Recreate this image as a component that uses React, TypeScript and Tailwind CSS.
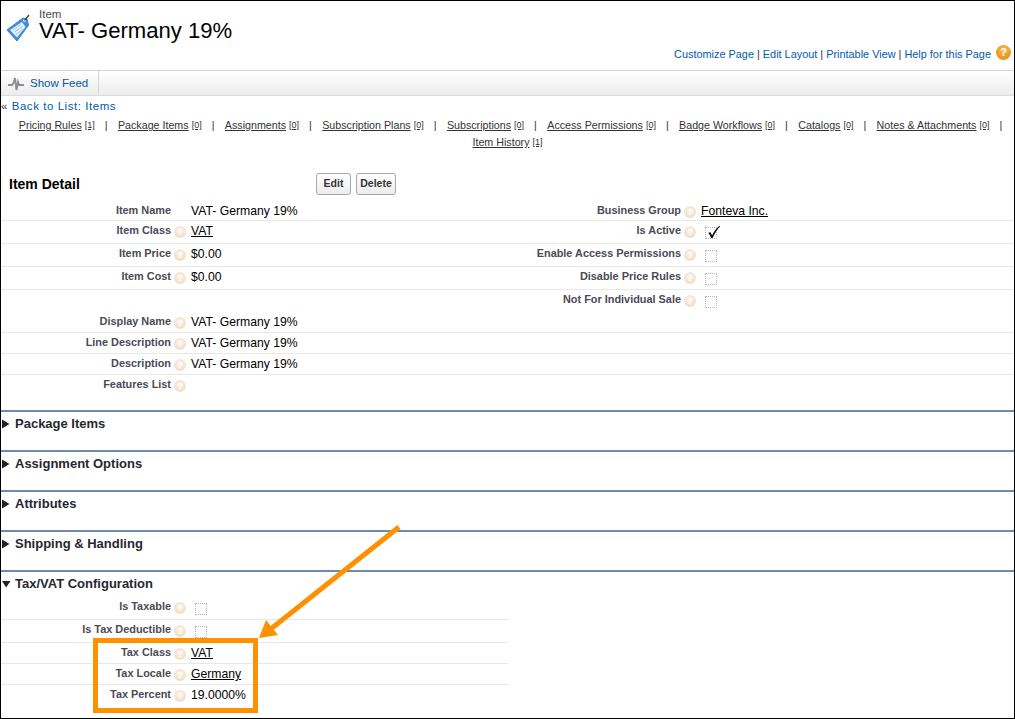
import React from "react";

const font = "font-['Liberation_Sans',Arial,sans-serif]";

function Help() {
  return (
    <span className="flex h-[12px] w-[12px] shrink-0 items-center justify-center rounded-full bg-[radial-gradient(circle_at_50%_40%,#fbf4ea,#eed6ba)] text-[9px] leading-none font-bold text-white">
      ?
    </span>
  );
}

function Check({ on }: { on?: boolean }) {
  return (
    <span className="relative ml-[4px] mt-[3px] block h-[12px] w-[12px] border border-dotted border-[#b5b5b5]">
      {on && (
        <svg className="absolute left-[1px] top-[-3px]" width="14" height="14" viewBox="0 0 15 15">
          <path d="M1.5 8.5 L3.5 7.5 L5.5 11 C7.5 7 10 3.5 13.5 0.8 L14 1.5 C11 4.5 8.5 8.5 6 14 L4.5 14 C3.8 12 2.8 10 1.5 8.5 Z" fill="#111" />
        </svg>
      )}
    </span>
  );
}

function Field({
  label,
  help = true,
  children,
  first,
}: {
  label?: string;
  help?: boolean;
  children?: React.ReactNode;
  first?: boolean;
}) {
  return (
    <div className={`flex min-w-0 flex-1 items-start ${first ? "pt-[2px]" : ""}`}>
      <div className="w-[170px] shrink-0 pt-[2px] text-right text-[10.9px] leading-[14px] font-bold text-[#4a4a56]">{label}</div>
      <div className="flex w-[20px] shrink-0 justify-center pt-[5px] pr-[2px]">{label && help ? <Help /> : null}</div>
      <div className="flex-1 pt-[3px] text-[12.2px] leading-[15px] text-black">{children}</div>
    </div>
  );
}

function Row({
  h,
  left,
  right,
  plain,
}: {
  h: string;
  left?: React.ReactNode;
  right?: React.ReactNode;
  plain?: boolean;
}) {
  return (
    <div className={`flex ${h} ${plain ? "" : "border-b border-[#e8e8e8]"}`}>
      <div className="flex w-[510px] shrink-0">{left}</div>
      <div className="flex flex-1">{right}</div>
    </div>
  );
}

function Section({ title, open }: { title: string; open?: boolean }) {
  return (
    <div className={`${open ? "h-[27px]" : "h-[40px]"} flex items-start border-t-2 border-[#6f8bab] pt-[4px]`}>
      <svg className="mt-[3px]" width="11" height="10" viewBox="0 0 11 10">
        {open ? <path d="M1 2 H9.5 L5.2 8.5 Z" fill="#222" /> : <path d="M1 0.5 V9.5 L8.5 5 Z" fill="#222" />}
      </svg>
      <span className="ml-[3px] text-[13px] leading-[16px] font-bold text-[#27282e]">{title}</span>
    </div>
  );
}

const links: [string, string][] = [
  ["Pricing Rules", "[1]"],
  ["Package Items", "[0]"],
  ["Assignments", "[0]"],
  ["Subscription Plans", "[0]"],
  ["Subscriptions", "[0]"],
  ["Access Permissions", "[0]"],
  ["Badge Workflows", "[0]"],
  ["Catalogs", "[0]"],
  ["Notes & Attachments", "[0]"],
];

export default function App() {
  return (
    <div className={`${font} relative h-[719px] w-[1015px] overflow-hidden border border-black bg-white`}>
      {/* Header */}
      <div className="relative flex h-[70px] border-b border-[#d4d4d4]">
        <svg className="ml-[5px] mt-[13px] shrink-0" width="26" height="28" viewBox="0 0 26 28">
          <path d="M1 16 L17 4 L21 5 L22.5 11 L11 27 Z" fill="#3f8fdd" stroke="#3a7fc8" strokeLinejoin="round" />
          <path d="M4 16 L16 8 L19.5 13 L11 23.5 Z" fill="#eaf2fa" />
          <path d="M7 16 L15 10.5 M8.5 18 L16.5 12.5 M10 20.5 L17 15" stroke="#9dbfe0" strokeWidth="1" />
          <circle cx="18.5" cy="6.5" r="1.3" fill="#fff" />
          <path d="M18.5 6.5 L23 1" stroke="#333" strokeWidth="1.2" />
        </svg>
        <div className="ml-[7px] mt-[7px]">
          <div className="text-[11.5px] leading-[12px] text-[#4a4a56]">Item</div>
          <div className="text-[22.1px] leading-[22px] text-black">VAT- Germany 19%</div>
        </div>
        <div className="ml-auto mr-[3px] mt-[44px] flex items-start text-[10.9px] leading-[16px] text-[#015ba7]">
          <span className="mt-[1px]">Customize Page</span>
          <span className="mx-[3px] mt-[1px] text-[#333]">|</span>
          <span className="mt-[1px]">Edit Layout</span>
          <span className="mx-[3px] mt-[1px] text-[#333]">|</span>
          <span className="mt-[1px]">Printable View</span>
          <span className="mx-[3px] mt-[1px] text-[#333]">|</span>
          <span className="mt-[1px]">Help for this Page</span>
          <span className="ml-[5px] flex h-[15px] w-[15px] items-center justify-center rounded-full bg-[radial-gradient(circle_at_50%_30%,#f8b84a,#e08a10)] text-[11px] leading-none font-bold text-white">?</span>
        </div>
      </div>

      {/* Feed bar */}
      <div className="flex h-[25px] border-b border-[#dcdcdc] bg-gradient-to-b from-white to-[#ececec]">
        <div className="flex w-[98px] items-center border-r border-[#d4d4d4] pt-[1px]">
          <svg className="ml-[7px] shrink-0" width="16" height="14" viewBox="0 0 16 14">
            <path d="M0 8 H4 L5.5 6 L7 1 L8.5 13 L10 5 L11 8 H16" fill="none" stroke="#8e8e8e" strokeWidth="1.9" />
          </svg>
          <span className="ml-[6px] text-[11.5px] text-[#015ba7]">Show Feed</span>
        </div>
      </div>

      {/* Back link */}
      <div className="mt-[3px] text-[11.5px] leading-[14px] tracking-[0.55px]">
        <span className="text-[#333]">«</span> <span className="text-[#015ba7]">Back to List: Items</span>
      </div>

      {/* Related links */}
      <div className="mt-[5px] flex flex-wrap justify-center gap-y-[3px] pl-[6px] text-[10.7px] leading-[14px] text-[#333]">
        {links.map(([t, n], i) => (
          <span key={t} className="flex">
            <span className="underline">{t}</span>
            <span className="ml-[3px] text-[9px] underline">{n}</span>
            <span className={`ml-[10px] ${i === links.length - 1 ? "" : "mr-[10.4px]"}`}>|</span>
          </span>
        ))}
        <span className="mr-[6px] flex">
          <span className="underline">Item History</span>
          <span className="ml-[3px] text-[9px] underline">[1]</span>
        </span>
      </div>

      {/* Item Detail title */}
      <div className="mt-[22px] flex h-[26px] items-center">
        <div className="ml-[8px] w-[307px] text-[14px] font-bold text-black">Item Detail</div>
        <button className="h-[22px] w-[35px] rounded-[3px] border border-[#a8a8a8] bg-gradient-to-b from-white to-[#ececec] text-[10.5px] font-bold text-[#333]">Edit</button>
        <button className="ml-[5px] h-[22px] w-[40px] rounded-[3px] border border-[#a8a8a8] bg-gradient-to-b from-white to-[#ececec] text-[10.5px] font-bold text-[#333]">Delete</button>
      </div>

      {/* Details */}
      <div className="mt-[2px]">
        <Row
          h="h-[22px]"
          left={<Field first label="Item Name" help={false}>VAT- Germany 19%</Field>}
          right={<Field first label="Business Group"><span className="underline">Fonteva Inc.</span></Field>}
        />
        <Row
          h="h-[23px]"
          left={<Field label="Item Class"><span className="underline">VAT</span></Field>}
          right={<Field label="Is Active"><Check on /></Field>}
        />
        <Row
          h="h-[23px]"
          left={<Field label="Item Price">$0.00</Field>}
          right={<Field label="Enable Access Permissions"><Check /></Field>}
        />
        <Row
          h="h-[23px]"
          left={<Field label="Item Cost">$0.00</Field>}
          right={<Field label="Disable Price Rules"><Check /></Field>}
        />
        <Row h="h-[22px]" plain right={<Field label="Not For Individual Sale"><Check /></Field>} />
        <Row h="h-[21px]" left={<Field label="Display Name">VAT- Germany 19%</Field>} />
        <Row h="h-[21px]" left={<Field label="Line Description">VAT- Germany 19%</Field>} />
        <Row h="h-[21px]" left={<Field label="Description">VAT- Germany 19%</Field>} />
        <div className="flex h-[35px]">
          <Field label="Features List" />
        </div>
      </div>

      <Section title="Package Items" />
      <Section title="Assignment Options" />
      <Section title="Attributes" />
      <Section title="Shipping & Handling" />
      <Section title="Tax/VAT Configuration" open />

      <div className="w-[507px]">
        <Row h="h-[23px]" left={<Field label="Is Taxable"><Check /></Field>} />
        <Row h="h-[23px]" left={<Field label="Is Tax Deductible"><Check /></Field>} />
        <Row h="h-[21px]" left={<Field label="Tax Class"><span className="underline">VAT</span></Field>} />
        <Row h="h-[21px]" left={<Field label="Tax Locale"><span className="underline">Germany</span></Field>} />
        <div className="flex h-[21px]"><Field label="Tax Percent">19.0000%</Field></div>
      </div>

      {/* Annotation */}
      <div className="absolute left-[92px] top-[637px] h-[75px] w-[165px] border-[5px] border-[#ff9100]" />
      <svg className="absolute left-[-1px] top-[-1px]" width="1015" height="719" viewBox="0 0 1015 719">
        <path d="M399 527 L272 628" stroke="#ff9100" strokeWidth="5" fill="none" />
        <path d="M259 638 L266 620 L278 635 Z" fill="#ff9100" />
      </svg>
    </div>
  );
}
